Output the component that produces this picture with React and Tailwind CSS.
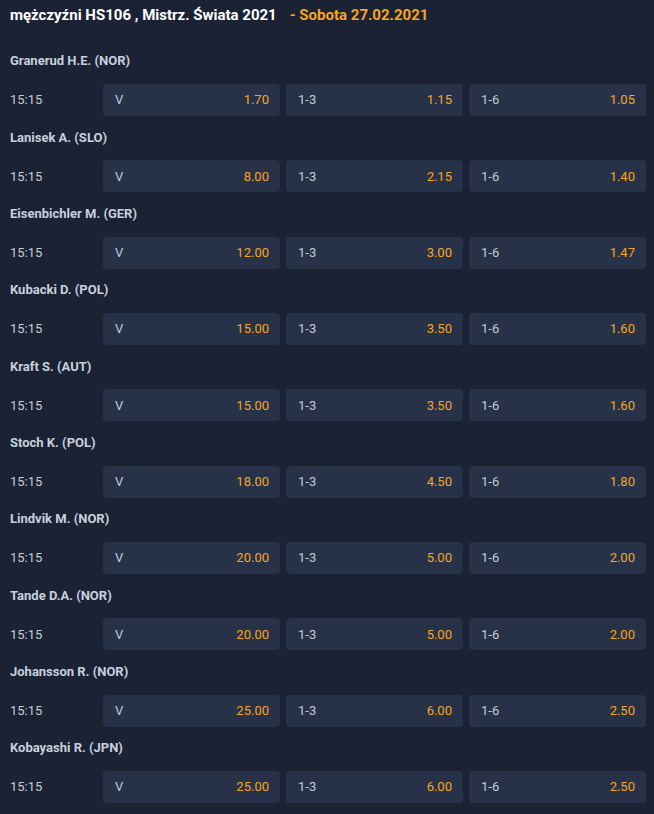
import React from 'react';

const rows = [
  { name: 'Granerud H.E. (NOR)', odds: ['1.70', '1.15', '1.05'] },
  { name: 'Lanisek A. (SLO)', odds: ['8.00', '2.15', '1.40'] },
  { name: 'Eisenbichler M. (GER)', odds: ['12.00', '3.00', '1.47'] },
  { name: 'Kubacki D. (POL)', odds: ['15.00', '3.50', '1.60'] },
  { name: 'Kraft S. (AUT)', odds: ['15.00', '3.50', '1.60'] },
  { name: 'Stoch K. (POL)', odds: ['18.00', '4.50', '1.80'] },
  { name: 'Lindvik M. (NOR)', odds: ['20.00', '5.00', '2.00'] },
  { name: 'Tande D.A. (NOR)', odds: ['20.00', '5.00', '2.00'] },
  { name: 'Johansson R. (NOR)', odds: ['25.00', '6.00', '2.50'] },
  { name: 'Kobayashi R. (JPN)', odds: ['25.00', '6.00', '2.50'] },
];

const labels = ['V', '1-3', '1-6'];

const OddButton = ({ label, value }) => (
  <button className="h-[32px] rounded-[4px] bg-[#273248] flex items-center justify-between pl-[12px] pr-[11px] text-[13px]">
    <span className="text-[#c3cbd9]">{label}</span>
    <span className="text-[#f5a524]">{value}</span>
  </button>
);

const App = () => {
  return (
    <div className="w-[654px] h-[814px] bg-[#1a2234] overflow-hidden" style={{ fontFamily: 'Roboto, "Liberation Sans", sans-serif' }}>
      <div className="h-[42px] pl-[10px] pt-[5px] flex items-start text-[15px] font-bold">
        <span className="text-white leading-[20px]">mężczyźni HS106 , Mistrz. Świata 2021</span>
        <span className="text-[#f5a524] leading-[20px] ml-[13px]">- Sobota 27.02.2021</span>
      </div>
      {rows.map((row, i) => (
        <div key={i} className="h-[76.33px]">
          <div className="h-[38px] flex items-center pl-[10px] text-[13px] font-bold text-[#c8d0dd]">
            {row.name}
          </div>
          <div className="mt-[4px] flex items-center">
            <div className="w-[103px] shrink-0 pl-[10px] text-[13px] text-[#c3cbd9]">15:15</div>
            <div className="w-[543px] grid grid-cols-3 gap-[6px]">
              {row.odds.map((o, j) => (
                <OddButton key={j} label={labels[j]} value={o} />
              ))}
            </div>
          </div>
        </div>
      ))}
    </div>
  );
};

export default App;
